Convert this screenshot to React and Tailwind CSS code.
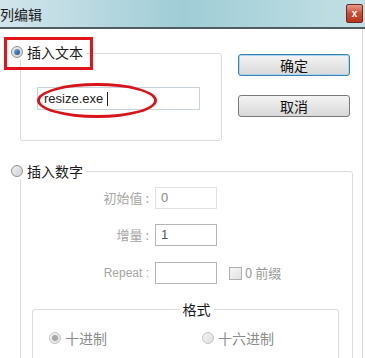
import React from "react";

const cjk = "font-['Noto_Sans_CJK_SC',sans-serif]";

function Radio({ checked, disabled }) {
  return (
    <span
      className={`relative flex items-center justify-center w-[12px] h-[12px] rounded-full border shrink-0 ${
        disabled
          ? "border-[#c4c4c4] bg-gradient-to-br from-[#f4f4f4] to-[#dedede]"
          : "border-[#8e8f8f] bg-gradient-to-br from-[#f0f0f0] to-[#d2d2d2]"
      }`}
    >
      {checked && (
        <span
          className={`w-[6px] h-[6px] rounded-full ${
            disabled ? "bg-[#a8a8a8]" : "bg-gradient-to-br from-[#7fb3dd] to-[#1c4a80]"
          }`}
        />
      )}
    </span>
  );
}

function Field({ label, value, dim }) {
  return (
    <div className="flex items-center h-[22px]">
      <span className={`w-[128px] text-right text-[13px] leading-[16px] text-[#a6a6a6] ${cjk}`}>{label}</span>
      <div
        className={`ml-[6px] w-[62px] h-[22px] border bg-white flex items-center pl-[5px] text-[13px] font-['Liberation_Sans',sans-serif] ${
          dim ? "border-[#e0e0e0] text-[#8a8a8a]" : "border-[#b5b5b5] text-[#555]"
        }`}
      >
        {value}
      </div>
    </div>
  );
}

export default function App() {
  return (
    <div className="relative w-[365px] h-[358px] overflow-hidden bg-white">
      {/* Title bar */}
      <div className="h-[29px] border-b-2 border-[#4f5d62] bg-gradient-to-r from-[#d3e5ec] via-[#9fcdd6] to-[#c3e0e5] flex items-center justify-between pr-[2px]">
        <span className={`text-[14px] leading-[16px] text-[#1a1a1a] ${cjk}`}>列编辑</span>
        <div className="w-[17px] h-[19px] rounded-[2px] border border-[#6b2a20] bg-gradient-to-b from-[#e69a88] via-[#c94c36] to-[#b8351f] flex items-center justify-center text-white text-[10px] font-bold leading-none font-['Liberation_Sans',sans-serif]">
          x
        </div>
      </div>

      {/* Body */}
      <div className="w-[363px] h-[329px] border-r border-[#d9d9d9] flex flex-col">
        <div className="flex pt-[15px]">
          {/* Insert text group */}
          <div className="flex flex-col w-[222px]">
            <div className="relative z-10 ml-[11px] w-fit h-[16px] flex items-center gap-[4px] bg-white pr-[3px]">
              <Radio checked />
              <span className={`text-[14px] leading-[16px] text-[#1a1a1a] ${cjk}`}>插入文本</span>
            </div>
            <div className="-mt-[7px] ml-[20px] w-[202px] h-[88px] border border-[#dcdcdc] rounded-[3px] pl-[16px] pt-[33px]">
              <div className="w-[163px] h-[23px] border border-[#c9d3dc] flex items-center pl-[6px] text-[13px] text-[#222] font-['Liberation_Sans',sans-serif]">
                resize.exe<span className="ml-[4px] w-px h-[14px] bg-[#222]" />
              </div>
            </div>
          </div>

          {/* Buttons */}
          <div className="ml-[16px] pt-[10px] flex flex-col gap-[19px]">
            <button className={`w-[112px] h-[22px] rounded-[3px] border border-[#3c7fb1] shadow-[0_0_0_1px_#a9d6f0_inset] bg-gradient-to-b from-[#f4f4f4] to-[#d8d8d8] text-[14px] leading-none text-[#111] ${cjk}`}>
              确定
            </button>
            <button className={`w-[112px] h-[22px] rounded-[3px] border border-[#7a7a7a] bg-gradient-to-b from-[#f4f4f4] to-[#d8d8d8] text-[14px] leading-none text-[#111] ${cjk}`}>
              取消
            </button>
          </div>
        </div>

        {/* Insert number group */}
        <div className="relative z-10 mt-[22px] ml-[11px] w-fit h-[16px] flex items-center gap-[4px] bg-white pr-[3px]">
          <Radio />
          <span className={`text-[14px] leading-[16px] text-[#1a1a1a] ${cjk}`}>插入数字</span>
        </div>
        <div className="-mt-[8px] ml-[20px] w-[333px] h-[220px] border border-[#dcdcdc] rounded-[3px] pt-[15px] flex flex-col">
          <div className="flex flex-col gap-[15px]">
            <Field label="初始值 :" value="0" dim />
            <Field label="增量 :" value="1" />
            <div className="flex items-center h-[22px] mt-[1px]">
              <span className="w-[128px] text-right text-[12px] leading-[16px] text-[#a6a6a6] font-['Liberation_Sans',sans-serif]">
                Repeat :
              </span>
              <div className="ml-[6px] w-[62px] h-[22px] border border-[#b5b5b5] bg-white" />
              <span className="ml-[12px] w-[13px] h-[13px] border border-[#b0b0b0] bg-gradient-to-br from-[#f6f6f6] to-[#e2e2e2]" />
              <span className={`ml-[3px] text-[13px] leading-[16px] text-[#9a9a9a] ${cjk}`}>0 前缀</span>
            </div>
          </div>

          {/* Format group */}
          <div className={`relative z-10 mt-[17px] self-center ml-[20px] h-[16px] px-[3px] bg-white text-[14px] leading-[16px] text-[#1a1a1a] ${cjk}`}>
            格式
          </div>
          <div className="-mt-[8px] ml-[11px] w-[307px] h-[80px] border border-[#dcdcdc] rounded-[3px] pt-[20px] pl-[16px] flex">
            <div className="w-[153px] h-[16px] flex items-center gap-[4px]">
              <Radio checked disabled />
              <span className={`text-[14px] leading-[16px] text-[#8c8c8c] ${cjk}`}>十进制</span>
            </div>
            <div className="h-[16px] flex items-center gap-[4px]">
              <Radio disabled />
              <span className={`text-[14px] leading-[16px] text-[#8c8c8c] ${cjk}`}>十六进制</span>
            </div>
          </div>
        </div>
      </div>

      {/* Red annotations */}
      <div className="absolute left-[4px] top-[37px] w-[89px] h-[33px] border-[3px] border-[#e0151b]" />
      <div className="absolute left-[37px] top-[83px] w-[120px] h-[35px] rounded-[50%] border-[3px] border-[#d8141b]" />
    </div>
  );
}
